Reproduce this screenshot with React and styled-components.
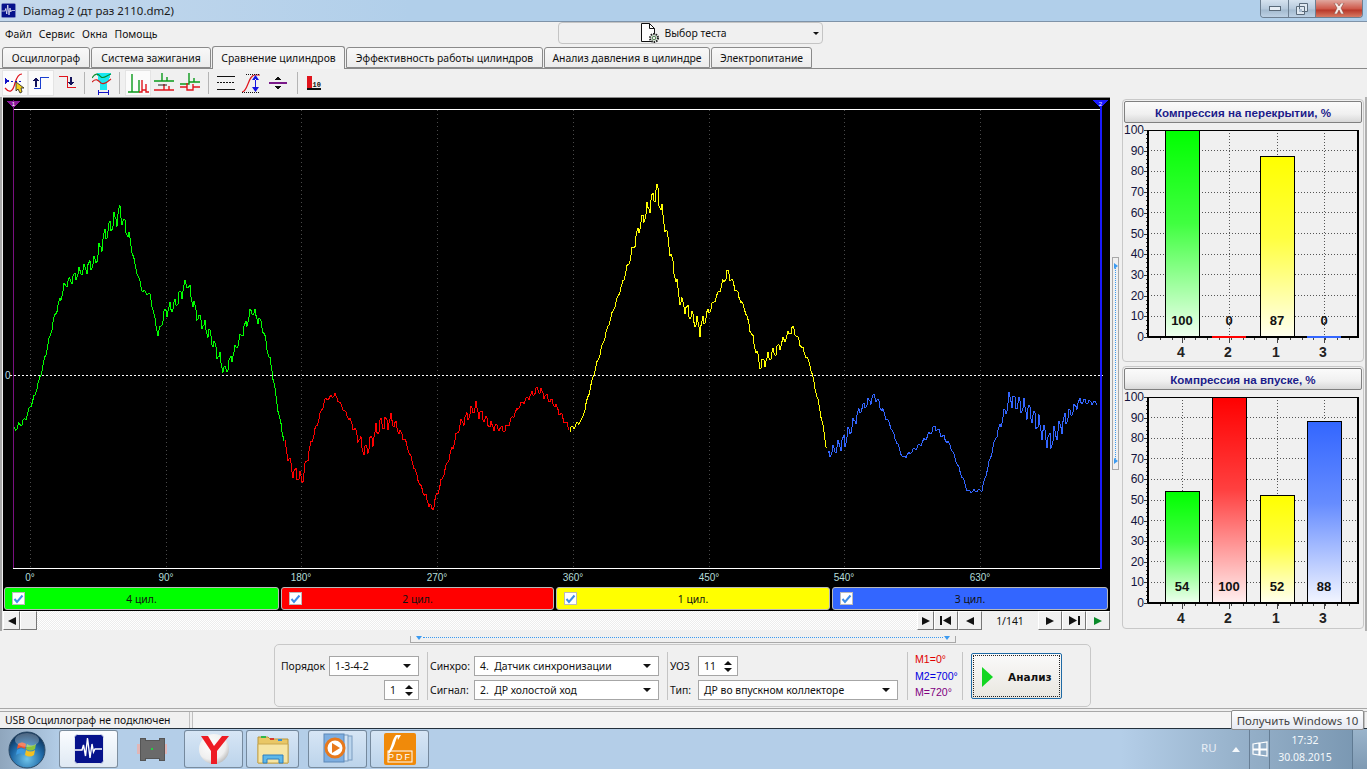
import React from "react";
import styled, { createGlobalStyle } from "styled-components";

const UI = `"Noto Sans", "Liberation Sans", sans-serif`;
const ARIAL = `"Liberation Sans", Arial, sans-serif`;

// key points of the trace in page pixels: x, y, ripple amplitude
const SEGMENTS = [
  { color: "#00ff00", points: [[14,430,2],[25,420,2],[35,395,1],[42,370,1],[55,315,2],[65,285,3],[80,272,4],[95,262,5],[105,235,6],[120,212,7],[130,240,3],[135,265,1],[142,290,1],[150,295,1],[158,335,1],[165,312,4],[175,305,5],[187,282,5],[197,315,4],[210,335,5],[225,372,5],[235,350,3],[252,310,4],[262,325,3],[272,370,2],[278,410,1],[285,445,2]] },
  { color: "#ff0000", points: [[285,445,3],[292,470,5],[302,480,5],[312,440,2],[325,400,1],[335,395,1],[350,420,1],[365,452,6],[380,425,6],[392,420,5],[405,440,1],[420,485,1],[432,510,3],[445,470,1],[460,425,3],[475,407,5],[490,425,3],[505,430,2],[520,405,1],[538,389,3],[555,405,2],[570,430,2]] },
  { color: "#ffff00", points: [[570,430,2],[582,420,1],[595,370,1],[610,320,1],[622,285,1],[640,225,5],[657,190,7],[667,235,4],[680,300,4],[700,328,6],[715,300,1],[728,272,3],[745,310,1],[760,365,4],[775,352,4],[793,328,2],[810,365,1],[820,410,1],[828,455,3]] },
  { color: "#3366ff", points: [[828,455,3],[845,440,6],[860,410,3],[875,396,3],[890,425,1],[903,458,1],[920,445,1],[935,427,2],[950,445,1],[968,492,1],[982,490,1],[995,440,1],[1010,398,6],[1030,412,7],[1050,442,8],[1065,420,6],[1080,401,2],[1098,403,1]] },
];

const tracePoints = (points) => {
  const out = [];
  for (let i = 0; i < points.length - 1; i++) {
    const [x0, y0, a0] = points[i];
    const [x1, y1, a1] = points[i + 1];
    for (let x = x0; x < x1; x++) {
      const t = (x - x0) / (x1 - x0);
      const amp = a0 + (a1 - a0) * t;
      const ripple = Math.sin(x * 1.25) * (amp * 1.1 + 0.4) + Math.sin(x * 2.9 + 1) * amp * 0.4;
      out.push(`${x},${(y0 + (y1 - y0) * t + ripple).toFixed(1)}`);
    }
  }
  return out.join(" ");
};

const DEGREES = [0, 90, 180, 270, 360, 450, 540, 630];

const GlobalStyle = createGlobalStyle`
  html, body { margin: 0; padding: 0; background: #f0f0f0; overflow: hidden; }
  * { box-sizing: border-box; }
`;

const Screen = styled.div`
  position: relative;
  width: 1367px;
  height: 769px;
  display: flex;
  flex-direction: column;
  background: #f0f0f0;
  font-family: ${UI};
  font-size: 10.4px;
  color: #111;
`;

const TitleBar = styled.div`
  height: 22px;
  flex: none;
  display: flex;
  align-items: flex-start;
  background: linear-gradient(90deg, #c4d8ec 0%, #b1cfea 30%, #b1cfea 100%);
  border-bottom: 1px solid #7f93a8;
`;

const TitleIcon = styled.div`
  margin: 3px 0 0 1px;
`;

const TitleText = styled.div`
  margin: 2px 0 0 7px;
  font-size: 11.4px;
  line-height: 17px;
  color: #1a1a1a;
`;

const WindowButtons = styled.div`
  margin-left: auto;
  margin-right: 4px;
  display: flex;
  height: 18px;
  border: 1px solid #6d7f92;
  border-top: none;
  border-radius: 0 0 4px 4px;
  overflow: hidden;
`;

const WindowButton = styled.div`
  width: ${(p) => p.$w}px;
  display: flex;
  align-items: center;
  justify-content: center;
  background: ${(p) =>
    p.$close
      ? "linear-gradient(#e0a79e 0%, #cf5b4c 50%, #b93a2b 60%, #d77a63 100%)"
      : "linear-gradient(#d5e2ef 0%, #b7cadd 50%, #a4bbd0 60%, #bcd0e4 100%)"};
  border-right: ${(p) => (p.$close ? "none" : "1px solid #6d7f92")};
`;

const MenuRow = styled.div`
  height: 24px;
  flex: none;
  display: flex;
  align-items: flex-start;
`;

const Menu = styled.div`
  width: 558px;
  display: flex;
  padding: 5px 0 0 5px;
  gap: 7px;
`;

const TestButton = styled.div`
  width: 265px;
  height: 22px;
  display: flex;
  align-items: center;
  justify-content: center;
  gap: 3px;
  padding-right: 14px;
  position: relative;
  border: 1px solid #c4c4c4;
  border-radius: 4px;
  background: #f0f0f0;
`;

const Caret = styled.span`
  width: 0;
  height: 0;
  border-left: ${(p) => p.$size || 3}px solid transparent;
  border-right: ${(p) => p.$size || 3}px solid transparent;
  border-top: ${(p) => p.$size || 3}px solid #111;
`;

const TestCaret = styled(Caret)`
  position: absolute;
  right: 3px;
  top: 9px;
`;

const TabRow = styled.div`
  height: 23px;
  flex: none;
  display: flex;
  align-items: flex-end;
  padding-left: 2px;
  gap: 1px;
  border-bottom: 1px solid #8a8a8a;
`;

const Tab = styled.div`
  width: ${(p) => p.$w}px;
  height: ${(p) => (p.$active ? 23 : 21)}px;
  margin-bottom: ${(p) => (p.$active ? -1 : 0)}px;
  display: flex;
  align-items: center;
  justify-content: center;
  border: 1px solid #8a8a8a;
  border-bottom: ${(p) => (p.$active ? "none" : "1px solid #8a8a8a")};
  border-radius: 3px 3px 0 0;
  background: ${(p) => (p.$active ? "#f4f4f4" : "linear-gradient(#f8f8f8, #ececec)")};
  z-index: ${(p) => (p.$active ? 1 : 0)};
`;

const Toolbar = styled.div`
  height: 28px;
  flex: none;
  display: flex;
  align-items: center;
  padding-left: 2px;
`;

const ToolButton = styled.div`
  width: 26px;
  height: 26px;
  display: flex;
  align-items: center;
  justify-content: center;
  margin-bottom: 1px;
  background: ${(p) => (p.$on ? "#fbfbfb" : "transparent")};
  border: 1px solid ${(p) => (p.$on ? "#e4e4e4" : "transparent")};
`;

const ToolSep = styled.div`
  width: 1px;
  height: 22px;
  margin: 0 ${(p) => p.$r}px 0 ${(p) => p.$l}px;
  background: #b4b4b4;
`;

const Main = styled.div`
  height: 534px;
  flex: none;
  display: flex;
  padding: 0 0 0 1px;
  border-left: 2px solid #a8a8a8;
  border-right: 2px solid #b0b0b0;
`;

const LeftColumn = styled.div`
  width: 1107px;
  display: flex;
  flex-direction: column;
`;

const Scope = styled.div`
  background: #000;
  border-top: 1px solid #8a8a8a;
  height: 514px;
  display: flex;
  flex-direction: column;
`;

const ScopeCanvas = styled.svg`
  display: block;
  flex: none;
`;

const Legend = styled.div`
  display: grid;
  grid-template-columns: 275px 273px 274px 276px;
  column-gap: 2px;
  margin: 2px 0 0 1px;
`;

const LegendItem = styled.div`
  height: 23px;
  display: grid;
  grid-template-columns: 27px 1fr 27px;
  align-items: center;
  justify-items: center;
  background: ${(p) => p.$color};
  border: 1px solid #b9b9b9;
  border-radius: 3px;
  font-size: 10.4px;
  color: #111;
`;

const CheckBox = styled.div`
  width: 13px;
  height: 13px;
  background: #fff;
  border: 1px solid #bbb;
  display: flex;
  align-items: center;
  justify-content: center;
`;

const ScrollRow = styled.div`
  height: 19px;
  display: flex;
  align-items: stretch;
`;

const RaisedButton = styled.div`
  width: ${(p) => p.$w}px;
  display: flex;
  align-items: center;
  justify-content: center;
  background: #f0f0f0;
  border: 1px solid;
  border-color: #fff #777 #777 #fff;
`;

const ScrollTrack = styled.div`
  flex: 1;
  background-color: #fff;
  background-image: repeating-conic-gradient(#ededed 0 25%, #ffffff 0 50%);
  background-size: 2px 2px;
`;

const Counter = styled.div`
  width: 56px;
  display: flex;
  align-items: center;
  justify-content: center;
  background: #f0f0f0;
`;

const VSplit = styled.div`
  width: 7px;
  height: 213px;
  margin: 160px 0 0 2px;
  flex: none;
  position: relative;
  border: 1px solid #a8a8a8;
  background: #f0f0f0;
`;

const VDots = styled.div`
  position: absolute;
  left: 2px;
  top: 8px;
  bottom: 8px;
  border-left: 1px dotted #3b9af0;
`;

const SplitArrow = styled.span`
  position: absolute;
  left: 1px;
  top: ${(p) => (p.$end ? "auto" : "5px")};
  bottom: ${(p) => (p.$end ? "5px" : "auto")};
  width: 0;
  height: 0;
  border-top: 3px solid transparent;
  border-bottom: 3px solid transparent;
  border-left: 4px solid #3b9af0;
`;

const RightColumn = styled.div`
  width: 242px;
  margin: 2px 0 0 3px;
  display: flex;
  flex-direction: column;
  gap: 4px;
`;

const ChartPanel = styled.div`
  height: 263px;
  border: 1px solid #c8c8c8;
  border-radius: 4px;
  padding: 1px;
`;

const ChartTitle = styled.div`
  height: 22px;
  display: flex;
  align-items: center;
  justify-content: center;
  border: 1px solid #808080;
  border-radius: 2px;
  background: linear-gradient(#fbfbfb 0%, #f0f0f0 60%, #d8d8d8 100%);
  font-family: ${ARIAL};
  font-weight: bold;
  font-size: 11.6px;
  color: #1c1c8a;
`;

const ChartSvg = styled.svg`
  display: block;
  margin: 1px 0 0 -1px;
`;

const HSplitRow = styled.div`
  height: 13px;
  flex: none;
  padding: 5px 0 0 410px;
`;

const HSplit = styled.div`
  width: 546px;
  height: 7px;
  display: flex;
  align-items: flex-start;
  justify-content: space-between;
  padding: 0 5px;
  border: 1px solid #a8a8a8;
  border-top: none;
  position: relative;
`;

const HDots = styled.div`
  position: absolute;
  left: 12px;
  right: 12px;
  top: 1px;
  border-top: 1px dotted #3b9af0;
`;

const HArrow = styled.span`
  width: 0;
  height: 0;
  border-left: 3px solid transparent;
  border-right: 3px solid transparent;
  border-top: 4px solid #3b9af0;
`;

const ControlPanel = styled.div`
  width: 817px;
  height: 63px;
  flex: none;
  margin-left: 274px;
  padding: 11px 0 0 1px;
  display: flex;
  border: 1px solid #c8c8c8;
  border-radius: 5px;
`;

const ControlGroup = styled.div`
  width: ${(p) => p.$w}px;
  padding-left: ${(p) => p.$pad}px;
  display: grid;
  grid-template-columns: ${(p) => p.$cols};
  grid-template-rows: 20px 20px;
  row-gap: 4px;
  align-items: center;
  align-content: start;
`;

const Divider = styled.div`
  width: 1px;
  height: 48px;
  margin-top: -4px;
  background: #c4c4c4;
`;

const Field = styled.div`
  height: 20px;
  display: flex;
  align-items: center;
  justify-content: space-between;
  padding: 0 7px 0 5px;
  background: #fff;
  border: 1px solid #a6a6a6;
  white-space: pre;
  grid-column: ${(p) => p.$column || "auto"};
  width: ${(p) => (p.$w ? `${p.$w}px` : "auto")};
  justify-self: ${(p) => p.$justify || "stretch"};
`;

const SpinArrows = styled.span`
  display: flex;
  flex-direction: column;
  gap: 3px;
  margin-right: -2px;
`;

const CaretUp = styled.span`
  width: 0;
  height: 0;
  border-left: 4px solid transparent;
  border-right: 4px solid transparent;
  border-bottom: 4px solid #111;
`;

const CaretDown = styled(CaretUp)`
  border-bottom: none;
  border-top: 4px solid #111;
`;

const MarkerList = styled.div`
  width: 54px;
  padding: 0 0 0 7px;
  margin-top: -5px;
  display: flex;
  flex-direction: column;
  font-size: 10.6px;
  font-family: ${ARIAL};
  line-height: 16.5px;
`;

const Marker = styled.div`
  color: ${(p) => p.$color};
  white-space: nowrap;
`;

const AnalyzeButton = styled.div`
  width: 91px;
  height: 46px;
  margin: -3px 0 0 8px;
  display: flex;
  align-items: center;
  padding: 1px 0 0 10px;
  gap: 15px;
  border: 1px solid #1f6aa5;
  border-radius: 2px;
  outline: 1px dotted #222;
  outline-offset: -3px;
  background: linear-gradient(#fafafa, #e9e7e0);
  font-family: "DejaVu Sans", sans-serif;
  font-weight: bold;
  font-size: 10.5px;
`;

const StatusBar = styled.div`
  height: 17px;
  flex: none;
  margin-top: 4px;
  display: flex;
  border-top: 1px solid #a8a8a8;
  position: relative;
  &::before {
    content: "";
    position: absolute;
    left: 0;
    right: 0;
    top: -4px;
    border-top: 1px solid #a8a8a8;
  }
`;

const StatusCell = styled.div`
  width: ${(p) => p.$w};
  flex: ${(p) => (p.$grow ? 1 : "none")};
  padding: 0 0 0 5px;
  line-height: 16px;
  border-right: 1px solid #c0c0c0;
  margin-right: 2px;
  background: ${(p) => (p.$grow ? "#f4f4f4" : "#f0f0f0")};
  border-left: ${(p) => (p.$grow ? "1px solid #c0c0c0" : "none")};
`;

const Taskbar = styled.div`
  height: 41px;
  flex: none;
  display: flex;
  align-items: stretch;
  border-top: 1px solid #23303c;
  background: linear-gradient(90deg, #8fa6bd 0%, #b4cee8 4.5%, #b4cee8 82%, #92adc6 92%, #7795b0 100%);
`;

const StartOrb = styled.div`
  margin: 2px 13px 0 8px;
  flex: none;
`;

const TaskButton = styled.div`
  width: ${(p) => p.$w}px;
  margin: 1px ${(p) => p.$gap || 2}px 1px 0;
  display: flex;
  align-items: center;
  justify-content: center;
  border-radius: 3px;
  border: 1px solid ${(p) => (p.$plain ? "transparent" : "rgba(90, 110, 130, 0.75)")};
  background: ${(p) =>
    p.$plain
      ? "transparent"
      : p.$active
      ? "linear-gradient(#fafcff, #dfe9f3)"
      : "linear-gradient(#d7e6f5, #bcd4eb)"};
`;

const Tray = styled.div`
  margin-left: auto;
  display: flex;
  align-items: center;
  color: #fff;
`;

const TrayLang = styled.div`
  width: 31px;
  color: #e8eef5;
  font-size: 11.5px;
  margin-top: -3px;
`;

const TrayFlag = styled.div`
  width: 21px;
  margin-left: 9px;
  height: 100%;
  display: flex;
  align-items: center;
  justify-content: center;
  border-left: 1px solid rgba(60, 80, 100, 0.5);
  border-right: 1px solid rgba(60, 80, 100, 0.5);
`;

const Clock = styled.div`
  width: 70px;
  text-align: center;
  font-size: 10.5px;
  line-height: 17px;
  color: #f4f8fb;
`;

const ShowDesktop = styled.div`
  width: 15px;
  height: 100%;
  margin-left: 12px;
  border-left: 1px solid #5f7a92;
  background: linear-gradient(#9ab4cb, #7f9ab3);
`;

const Tooltip = styled.div`
  position: absolute;
  left: 1231px;
  top: 710px;
  width: 133px;
  height: 20px;
  display: flex;
  align-items: center;
  justify-content: center;
  background: linear-gradient(#ffffff, #e6e9f2);
  border: 1px solid #8d8d8d;
  border-radius: 2px;
  color: #444;
  font-size: 11.5px;
  z-index: 3;
`;

// --- drawings ---

const Tri = ({ dir, color = "#111", size = 8 }) => {
  const d = dir === "left" ? "M8 0 L0 4 L8 8Z" : "M0 0 L8 4 L0 8Z";
  return (
    <svg width={size} height={size} viewBox="0 0 8 8">
      <path d={d} fill={color} />
    </svg>
  );
};

const Skip = ({ dir }) => (
  <svg width="12" height="9" viewBox="0 0 12 9">
    {dir === "left" ? (
      <path d="M0 0h2v9H0z M11 0 L3 4.5 L11 9Z" fill="#111" />
    ) : (
      <path d="M10 0h2v9h-2z M1 0 L9 4.5 L1 9Z" fill="#111" />
    )}
  </svg>
);

const Tick = () => (
  <svg width="11" height="10" viewBox="0 0 11 10">
    <path d="M1.5 5 L4 8 L9.5 1.5" fill="none" stroke="#3d8ee8" strokeWidth="2" />
  </svg>
);

const CursorIcon = () => (
  <svg width="22" height="24" viewBox="0 0 22 24" shapeRendering="crispEdges">
    <path d="M1 17 C6 23 9 20 11 12 C13 5 15 3 18 3" fill="none" stroke="#e0141c" strokeWidth="1.2" shapeRendering="auto" />
    <path d="M1 7 L6 10 L1 13Z" fill="#1414c8" />
    <path d="M7 10.5h11" stroke="#1414c8" strokeDasharray="2 2" />
    <path d="M12 11 L12 20 L14 18 L16 22 L18 21 L17 17 L20 17Z" fill="#f4d020" stroke="#222" strokeWidth=".8" shapeRendering="auto" />
  </svg>
);

const RiseIcon = () => (
  <svg width="20" height="22" viewBox="0 0 20 22" shapeRendering="crispEdges">
    <path d="M3 16.5h6.5V5.500H18" fill="none" stroke="#1a3fd0" />
    <path d="M5 5 L8 9 L2 9Z M4 9h2v6H4z" fill="#14145c" />
  </svg>
);

const FallIcon = () => (
  <svg width="20" height="22" viewBox="0 0 20 22" shapeRendering="crispEdges">
    <path d="M2 4.500h8.500v11H19" fill="none" stroke="#e0141c" />
    <path d="M13 5h2v5h-2z M11 10 L17 10 L14 14Z" fill="#14145c" />
  </svg>
);

const ZoneIcon = () => (
  <svg width="20" height="24" viewBox="0 0 20 24">
    <path d="M5 2h14l-2 7-2 2v8H8v-8L6 8z" fill="#19e8f0" shapeRendering="crispEdges" />
    <path d="M0 7 C3 2 6 2 9 6 C12 8 15 4 19 3" fill="none" stroke="#0a8a2a" strokeWidth="1.1" />
    <path d="M0 11 C4 7 6 9 9 12 C12 14 15 11 19 8" fill="none" stroke="#d01a1a" strokeWidth="1.1" />
    <path d="M7 21.500h9M6.500 19v5M16.500 19v5" stroke="#1414c8" shapeRendering="crispEdges" />
  </svg>
);

const PulseBoth = () => (
  <svg width="22" height="24" viewBox="0 0 22 24">
    <path d="M1 21H5V3M5 21H12V9" fill="none" stroke="#0a9a1a" strokeWidth="1.4" />
    <path d="M12 21H15V9V19H19V13V21H22" fill="none" stroke="#e0141c" strokeWidth="1.4" />
  </svg>
);

const PulseSplit = () => (
  <svg width="22" height="24" viewBox="0 0 22 24">
    <path d="M1 10H9V2V10H14V6V10H21" fill="none" stroke="#0a9a1a" strokeWidth="1.4" />
    <path d="M1 19H11V13V19H16V15V19H21" fill="none" stroke="#e0141c" strokeWidth="1.4" />
    <path d="M5 14H14" stroke="#222" strokeWidth="1" />
  </svg>
);

const PulseCross = () => (
  <svg width="22" height="24" viewBox="0 0 22 24">
    <path d="M1 13H10V2V11H15V7V11H21" fill="none" stroke="#0a9a1a" strokeWidth="1.4" />
    <path d="M1 16H8V12V19H14V13V16H21" fill="none" stroke="#e0141c" strokeWidth="1.4" />
  </svg>
);

const LinesIcon = () => (
  <svg width="20" height="20" viewBox="0 0 20 20" shapeRendering="crispEdges">
    <path d="M1 3.500h18M1 16.500h18" stroke="#111" />
    <path d="M1 9.500h18" stroke="#111" strokeDasharray="2 1" />
  </svg>
);

const AmpIcon = () => (
  <svg width="22" height="24" viewBox="0 0 22 24">
    <path d="M1 21 C7 21 7 4 14 4 L19 4" fill="none" stroke="#e0141c" strokeWidth="1.2" />
    <path d="M5 3h14M1 21h18" stroke="#111" strokeDasharray="1 1" shapeRendering="crispEdges" />
    <path d="M14.500 4 L11 9 L18 9Z M14.500 21 L11 16 L18 16Z M14 8h1v9h-1z" fill="#1414e0" />
  </svg>
);

const PurpleIcon = () => (
  <svg width="20" height="20" viewBox="0 0 20 20" shapeRendering="crispEdges">
    <path d="M1 10h18" stroke="#7a1a8a" strokeWidth="2" />
    <path d="M10 3 L7 7 L13 7Z M10 17 L7 13 L13 13Z" fill="#111" />
  </svg>
);

const BarTenIcon = () => (
  <svg width="16" height="18" viewBox="0 0 16 18">
    <rect x="1" y="2" width="5" height="12" fill="#e0141c" />
    <path d="M1 15h14" stroke="#111" strokeWidth="2" />
    <text x="6.500" y="13" fontSize="7" fontWeight="bold" fontFamily="Liberation Mono, monospace" fill="#111">10</text>
  </svg>
);

const DocGear = () => (
  <svg width="21" height="22" viewBox="0 0 21 22">
    <path d="M1.500 1.500h8l5 5v13h-13z" fill="#fff" stroke="#111" />
    <path d="M9.500 1.500v5h5" fill="none" stroke="#111" />
    <circle cx="14" cy="16" r="4" fill="#e6efe6" stroke="#222" strokeWidth="2" strokeDasharray="1.5 1" />
    <circle cx="14" cy="16" r="1.8" fill="#f0f0f0" stroke="#4a7a4a" />
  </svg>
);

const PulseLogo = ({ size = 30 }) => (
  <svg width={size} height={size} viewBox="0 0 30 30">
    <rect x="0.5" y="0.5" width="29" height="29" rx="3" fill="#06128c" stroke="#dfe6f0" />
    <path d="M1 16h7l1.500-5 2 11 2-18 2.500 20 2-14 1.500 8 1.500-3h7" fill="none" stroke="#fff" strokeWidth="1.4" />
  </svg>
);

const Orb = () => (
  <svg width="38" height="38" viewBox="0 0 38 38">
    <defs>
      <radialGradient id="orbFill" cx="50%" cy="75%" r="70%">
        <stop offset="0%" stopColor="#6fc4ea" />
        <stop offset="60%" stopColor="#1f6aa8" />
        <stop offset="100%" stopColor="#0c2f55" />
      </radialGradient>
    </defs>
    <circle cx="19" cy="19" r="18" fill="url(#orbFill)" stroke="#2c4a66" />
    <path d="M10 13 C13 11 15 11 18 13 L17 18 C14 16 12 16 9 18Z" fill="#f0552a" />
    <path d="M19 13 C22 15 25 15 28 13 L27 18 C24 20 21 20 18 18Z" fill="#8ac43c" />
    <path d="M9 19 C12 17 14 17 17 19 L16 24 C13 22 11 22 8 24Z" fill="#3c9ae0" />
    <path d="M18 19 C21 21 24 21 27 19 L26 24 C23 26 20 26 17 24Z" fill="#f4c020" />
    <ellipse cx="19" cy="9" rx="12" ry="7" fill="#fff" opacity=".28" />
  </svg>
);

const ConnectorIcon = () => (
  <svg width="30" height="28" viewBox="0 0 30 28" shapeRendering="crispEdges">
    <rect x="0" y="9" width="3" height="10" fill="#e2b6b6" />
    <rect x="27" y="9" width="3" height="10" fill="#e2b6b6" />
    <path d="M3 3h5v2h14V3h5v22h-5v-2H8v2H3z" fill="#6a6a6a" stroke="#555" />
    <rect x="14" y="13" width="2" height="2" fill="#22d040" />
  </svg>
);

const YandexIcon = () => (
  <svg width="32" height="32" viewBox="0 0 32 32">
    <defs>
      <radialGradient id="yaBall" cx="40%" cy="35%" r="70%">
        <stop offset="0%" stopColor="#ffffff" />
        <stop offset="70%" stopColor="#efefef" />
        <stop offset="100%" stopColor="#b8b8b8" />
      </radialGradient>
    </defs>
    <circle cx="16" cy="16" r="15" fill="url(#yaBall)" />
    <path d="M3 3 L10 3 L16 13 L24 3 L31 3 L19 18 L19 31 L13 31 L13 18Z" fill="#ee1c25" />
  </svg>
);

const FolderIcon = () => (
  <svg width="32" height="32" viewBox="0 0 32 32">
    <path d="M1 4h10l2 2h18v24H1z" fill="#e9c766" stroke="#b8963c" />
    <rect x="4" y="3" width="5" height="2" fill="#2fb84a" />
    <rect x="13" y="5" width="4" height="2" fill="#d83a2a" />
    <rect x="21" y="6" width="4" height="2" fill="#2f8fd8" />
    <path d="M1 11h30v19H1z" fill="#f6e5a4" stroke="#c9a850" />
    <path d="M6 30v-8h20v8h-4v-4H10v4z" fill="#5db8ea" stroke="#2f7fc0" />
  </svg>
);

const MediaIcon = () => (
  <svg width="32" height="32" viewBox="0 0 32 32">
    <rect x="12" y="3" width="18" height="24" fill="#bcd6ee" stroke="#7a9cc0" />
    <rect x="8" y="2" width="18" height="26" fill="#d4e4f4" stroke="#7a9cc0" />
    <rect x="2" y="1" width="20" height="28" fill="#7eaee0" stroke="#5c88b8" />
    <circle cx="13" cy="15" r="9" fill="#fff" stroke="#e8791c" strokeWidth="3" />
    <path d="M10 10 L18 15 L10 20Z" fill="#e8791c" />
  </svg>
);

const PdfIcon = () => (
  <svg width="32" height="32" viewBox="0 0 32 32">
    <rect x="0" y="0" width="32" height="32" rx="2" fill="#f08a0a" />
    <path d="M4 19 C8 14 8 6 12 2 L14 2 C11 8 11 14 5 21Z M13 2h4l-3 5z" fill="#fff" />
    <rect x="4" y="18" width="24" height="11" fill="none" stroke="#fff" />
    <text x="16" y="27" textAnchor="middle" fontSize="9" letterSpacing="2" fill="#fff" fontFamily="Liberation Sans, sans-serif">PDF</text>
  </svg>
);

const GREEN = "#00ff00", RED = "#ff0000", YELLOW = "#ffff00", BLUE = "#3366ff";
const NAMES = ["4", "2", "1", "3"];
const COLORS = [GREEN, RED, YELLOW, BLUE];
const CENTERS = [59, 106, 154, 201];

const BarChart = ({ id, values, bottom }) => {
  const top = 6;
  const left = 25;
  const right = 235;
  const scale = (bottom - top) / 100;
  const grid = [10, 20, 30, 40, 50, 60, 70, 80, 90];
  const minor = [];
  for (let v = 0; v <= 100; v += 2) minor.push(v);
  const xMinor = [];
  for (let x = left + 12; x < right; x += 11.8) xMinor.push(Math.round(x));
  return (
    <ChartSvg width="240" height="238" viewBox="0 0 240 238">
      <defs>
        {COLORS.map((c, i) => (
          <linearGradient key={c} id={`${id}-${i}`} x1="0" y1="0" x2="0" y2="1">
            <stop offset="0%" stopColor={c} />
            <stop offset="45%" stopColor={c} stopOpacity="0.75" />
            <stop offset="100%" stopColor={c} stopOpacity="0.06" />
          </linearGradient>
        ))}
      </defs>
      <g shapeRendering="crispEdges">
        {grid.map((v) => (
          <line key={v} x1={left} x2={right} y1={bottom - v * scale} y2={bottom - v * scale} stroke="#555" strokeDasharray="1 2" />
        ))}
        {CENTERS.map((x) => (
          <line key={x} x1={x} x2={x} y1={top} y2={bottom} stroke="#555" strokeDasharray="1 2" />
        ))}
        {minor.map((v) => (
          <line key={v} x1={v % 10 === 0 ? left - 4 : left - 2} x2={left} y1={Math.round(bottom - v * scale)} y2={Math.round(bottom - v * scale)} stroke="#333" />
        ))}
        {xMinor.map((x) => (
          <line key={x} x1={x} x2={x} y1={bottom} y2={bottom + 3} stroke="#444" />
        ))}
        {CENTERS.map((x) => (
          <line key={x} x1={x} x2={x} y1={bottom} y2={bottom + 6} stroke="#444" />
        ))}
        {values.map((v, i) =>
          v === 0 ? null : (
            <g key={i}>
              <rect x={CENTERS[i] - 17} y={bottom - v * scale} width="34" height={v * scale} fill="#fff" />
              <rect x={CENTERS[i] - 17} y={bottom - v * scale} width="34" height={v * scale} fill={`url(#${id}-${i})`} stroke="#000" />
            </g>
          )
        )}
        <rect x={left} y={top} width={right - left} height={bottom - top} fill="none" stroke="#000" />
        <line x1={left} x2={right} y1={bottom} y2={bottom} stroke="#000" strokeWidth="2" />
        <line x1={left} x2={left} y1={top} y2={bottom} stroke="#000" strokeWidth="2" />
        <line x1={right} x2={right} y1={top} y2={bottom} stroke="#000" strokeWidth="2" />
        {values.map((v, i) =>
          v === 0 ? (
            <rect key={i} x={CENTERS[i] - 17} y={bottom - 1} width="34" height="2" fill={COLORS[i]} />
          ) : null
        )}
      </g>
      <g fontFamily={ARIAL} fontSize="12" fill="#14143c" textAnchor="end">
        {[0, 10, 20, 30, 40, 50, 60, 70, 80, 90, 100].map((v) => (
          <text key={v} x={left - 4} y={bottom - v * scale + 4}>{v}</text>
        ))}
      </g>
      <g fontFamily={ARIAL} fontWeight="bold" fontSize="13" fill="#111" textAnchor="middle">
        {values.map((v, i) => (
          <text key={i} x={CENTERS[i]} y={bottom - 12}>{v}</text>
        ))}
      </g>
      <g fontFamily={ARIAL} fontWeight="bold" fontSize="14" fill="#222" textAnchor="middle">
        {NAMES.map((n, i) => (
          <text key={n} x={CENTERS[i] - 1} y={bottom + 20}>{n}</text>
        ))}
      </g>
    </ChartSvg>
  );
};

const ScopeChart = () => (
  <ScopeCanvas width="1107" height="487" viewBox="3 98 1107 487">
    <g shapeRendering="crispEdges">
      {DEGREES.map((d, i) => {
        const x = Math.round(30 + i * 135.7);
        return <line key={d} x1={x} x2={x} y1="110" y2="572" stroke="#4a4a4a" strokeDasharray="1 3" />;
      })}
      <line x1="13" x2="1101" y1="109.5" y2="109.5" stroke="#fff" />
      <line x1="13" x2="1101" y1="568.5" y2="568.5" stroke="#fff" />
      <line x1="13.5" x2="13.5" y1="100" y2="568" stroke="#7a1080" />
      <line x1="1101" x2="1101" y1="100" y2="569" stroke="#1a1aff" strokeWidth="2" />
      <line x1="10" x2="1103" y1="375.5" y2="375.5" stroke="#fff" strokeDasharray="2 2" />
      {SEGMENTS.map((s) => (
        <polyline key={s.color} points={tracePoints(s.points)} fill="none" stroke={s.color} strokeWidth="1" />
      ))}
      <path d="M6 101h15l-7.500 7z" fill="#8a1a9a" />
      <path d="M1093 100h15l-7.500 8z" fill="#1a1aff" />
    </g>
    <text x="13.500" y="105.500" fontSize="6" fill="#fff" textAnchor="middle" fontFamily={ARIAL}>1</text>
    <text x="1100.500" y="105.500" fontSize="6" fill="#fff" textAnchor="middle" fontFamily={ARIAL}>2</text>
    <text x="5" y="379" fontSize="10" fill="#b8dce8" fontFamily={ARIAL}>0</text>
    <g fontSize="10" fill="#b4dcd8" fontFamily={ARIAL} textAnchor="middle">
      {DEGREES.map((d, i) => (
        <text key={d} x={Math.round(30 + i * 135.7)} y="581">{d}°</text>
      ))}
    </g>
  </ScopeCanvas>
);

const Select = ({ children }) => (
  <Field>
    <span>{children}</span>
    <Caret $size={4} />
  </Field>
);

const Spinner = ({ value, width, column, justify }) => (
  <Field $w={width} $column={column} $justify={justify}>
    <span>{value}</span>
    <SpinArrows>
      <CaretUp />
      <CaretDown />
    </SpinArrows>
  </Field>
);

const App = () => {
  return (
    <Screen>
      <GlobalStyle />
      <TitleBar>
        <TitleIcon>
          <PulseLogo size={15} />
        </TitleIcon>
        <TitleText>Diamag 2 (дт раз 2110.dm2)</TitleText>
        <WindowButtons>
          <WindowButton $w={28}>
            <svg width="12" height="6"><rect x=".5" y=".5" width="11" height="4" fill="#e6edf4" stroke="#5a6a7a" /></svg>
          </WindowButton>
          <WindowButton $w={27}>
            <svg width="12" height="12" viewBox="0 0 12 12"><path d="M3.500.5h8v8h-8z M.5 3.500h8v8h-8z" fill="#dfe8f1" stroke="#5a6a7a" /><rect x="3" y="6" width="3" height="3" fill="#a9bccf" /></svg>
          </WindowButton>
          <WindowButton $w={46} $close>
            <svg width="12" height="11" viewBox="0 0 12 11"><path d="M1 0h3l2 3 2-3h3L8 5l3 6H8L6 7l-2 4H1l3-6z" fill="#f5ece8" stroke="#7a3a30" strokeWidth=".5" /></svg>
          </WindowButton>
        </WindowButtons>
      </TitleBar>

      <MenuRow>
        <Menu>
          <span>Файл</span>
          <span>Сервис</span>
          <span>Окна</span>
          <span>Помощь</span>
        </Menu>
        <TestButton>
          <DocGear />
          <span>Выбор теста</span>
          <TestCaret />
        </TestButton>
      </MenuRow>

      <TabRow>
        <Tab $w={88}>Осциллограф</Tab>
        <Tab $w={120}>Система зажигания</Tab>
        <Tab $w={133} $active>Сравнение цилиндров</Tab>
        <Tab $w={197}>Эффективность работы цилиндров</Tab>
        <Tab $w={166}>Анализ давления в цилиндре</Tab>
        <Tab $w={101}>Электропитание</Tab>
      </TabRow>

      <Toolbar>
        <ToolButton $on><CursorIcon /></ToolButton>
        <ToolButton $on><RiseIcon /></ToolButton>
        <ToolButton><FallIcon /></ToolButton>
        <ToolSep $l={4} $r={4} />
        <ToolButton><ZoneIcon /></ToolButton>
        <ToolSep $l={4} $r={5} />
        <ToolButton $on><PulseBoth /></ToolButton>
        <ToolButton><PulseSplit /></ToolButton>
        <ToolButton><PulseCross /></ToolButton>
        <ToolSep $l={5} $r={4} />
        <ToolButton><LinesIcon /></ToolButton>
        <ToolButton><AmpIcon /></ToolButton>
        <ToolButton><PurpleIcon /></ToolButton>
        <ToolSep $l={6} $r={3} />
        <ToolButton><BarTenIcon /></ToolButton>
      </Toolbar>

      <Main>
        <LeftColumn>
          <Scope>
            <ScopeChart />
            <Legend>
              {["4 цил.", "2 цил.", "1 цил.", "3 цил."].map((name, i) => (
                <LegendItem key={name} $color={COLORS[i]}>
                  <CheckBox><Tick /></CheckBox>
                  <span>{name}</span>
                </LegendItem>
              ))}
            </Legend>
          </Scope>
          <ScrollRow>
            <RaisedButton $w={17}><Tri dir="left" /></RaisedButton>
            <RaisedButton $w={17} />
            <ScrollTrack />
            <RaisedButton $w={17}><Tri dir="right" /></RaisedButton>
            <RaisedButton $w={24}><Skip dir="left" /></RaisedButton>
            <RaisedButton $w={24}><Tri dir="left" /></RaisedButton>
            <Counter>1/141</Counter>
            <RaisedButton $w={24}><Tri dir="right" /></RaisedButton>
            <RaisedButton $w={24}><Skip dir="right" /></RaisedButton>
            <RaisedButton $w={24}><Tri dir="right" color="#0a8a2a" /></RaisedButton>
          </ScrollRow>
        </LeftColumn>

        <VSplit>
          <SplitArrow />
          <VDots />
          <SplitArrow $end />
        </VSplit>

        <RightColumn>
          <ChartPanel>
            <ChartTitle>Компрессия на перекрытии, %</ChartTitle>
            <BarChart id="overlap" values={[100, 0, 87, 0]} bottom={213} />
          </ChartPanel>
          <ChartPanel>
            <ChartTitle>Компрессия на впуске, %</ChartTitle>
            <BarChart id="intake" values={[54, 100, 52, 88]} bottom={212} />
          </ChartPanel>
        </RightColumn>
      </Main>

      <HSplitRow>
        <HSplit>
          <HDots />
          <HArrow />
          <HArrow />
        </HSplit>
      </HSplitRow>

      <ControlPanel>
        <ControlGroup $w={151} $pad={5} $cols="48px 90px">
          <span>Порядок</span>
          <Select>1-3-4-2</Select>
          <Spinner value="1" width={35} column="2" justify="end" />
        </ControlGroup>
        <Divider />
        <ControlGroup $w={239} $pad={2} $cols="44px 185px">
          <span>Синхро:</span>
          <Select>4.  Датчик синхронизации</Select>
          <span>Сигнал:</span>
          <Select>2.  ДР холостой ход</Select>
        </ControlGroup>
        <Divider />
        <ControlGroup $w={239} $pad={2} $cols="28px 200px">
          <span>УОЗ</span>
          <Spinner value="11" width={40} justify="start" />
          <span>Тип:</span>
          <Select>ДР во впускном коллекторе</Select>
        </ControlGroup>
        <Divider />
        <MarkerList>
          <Marker $color="#e00000">M1=0°</Marker>
          <Marker $color="#0000e0">M2=700°</Marker>
          <Marker $color="#800080">M=720°</Marker>
        </MarkerList>
        <Divider />
        <AnalyzeButton>
          <svg width="11" height="20" viewBox="0 0 11 20"><path d="M0 0 L11 10 L0 20Z" fill="#12d622" /></svg>
          <span>Анализ</span>
        </AnalyzeButton>
      </ControlPanel>

      <StatusBar>
        <StatusCell $w="190px">USB Осциллограф не подключен</StatusCell>
        <StatusCell $grow />
      </StatusBar>

      <Taskbar>
        <StartOrb><Orb /></StartOrb>
        <TaskButton $w={59} $active $gap={2}><PulseLogo size={30} /></TaskButton>
        <TaskButton $w={63} $plain $gap={1}><ConnectorIcon /></TaskButton>
        <TaskButton $w={59} $gap={3}><YandexIcon /></TaskButton>
        <TaskButton $w={53} $gap={9}><FolderIcon /></TaskButton>
        <TaskButton $w={59} $gap={3}><MediaIcon /></TaskButton>
        <TaskButton $w={59}><PdfIcon /></TaskButton>
        <Tray>
          <TrayLang>RU</TrayLang>
          <svg width="8" height="5" viewBox="0 0 8 5"><path d="M0 5 L4 0 L8 5Z" fill="#f4f8fb" /></svg>
          <TrayFlag>
            <svg width="16" height="16" viewBox="0 0 16 16"><path d="M1 3l6-1v6H1z M8 2l7-1v7H8z M1 9h6v5l-6-1z M8 9h7v6l-7-1z" fill="none" stroke="#fff" strokeWidth="1.2" /></svg>
          </TrayFlag>
          <Clock>
            <div>17:32</div>
            <div>30.08.2015</div>
          </Clock>
          <ShowDesktop />
        </Tray>
      </Taskbar>

      <Tooltip>Получить Windows 10</Tooltip>
    </Screen>
  );
};

export default App;
